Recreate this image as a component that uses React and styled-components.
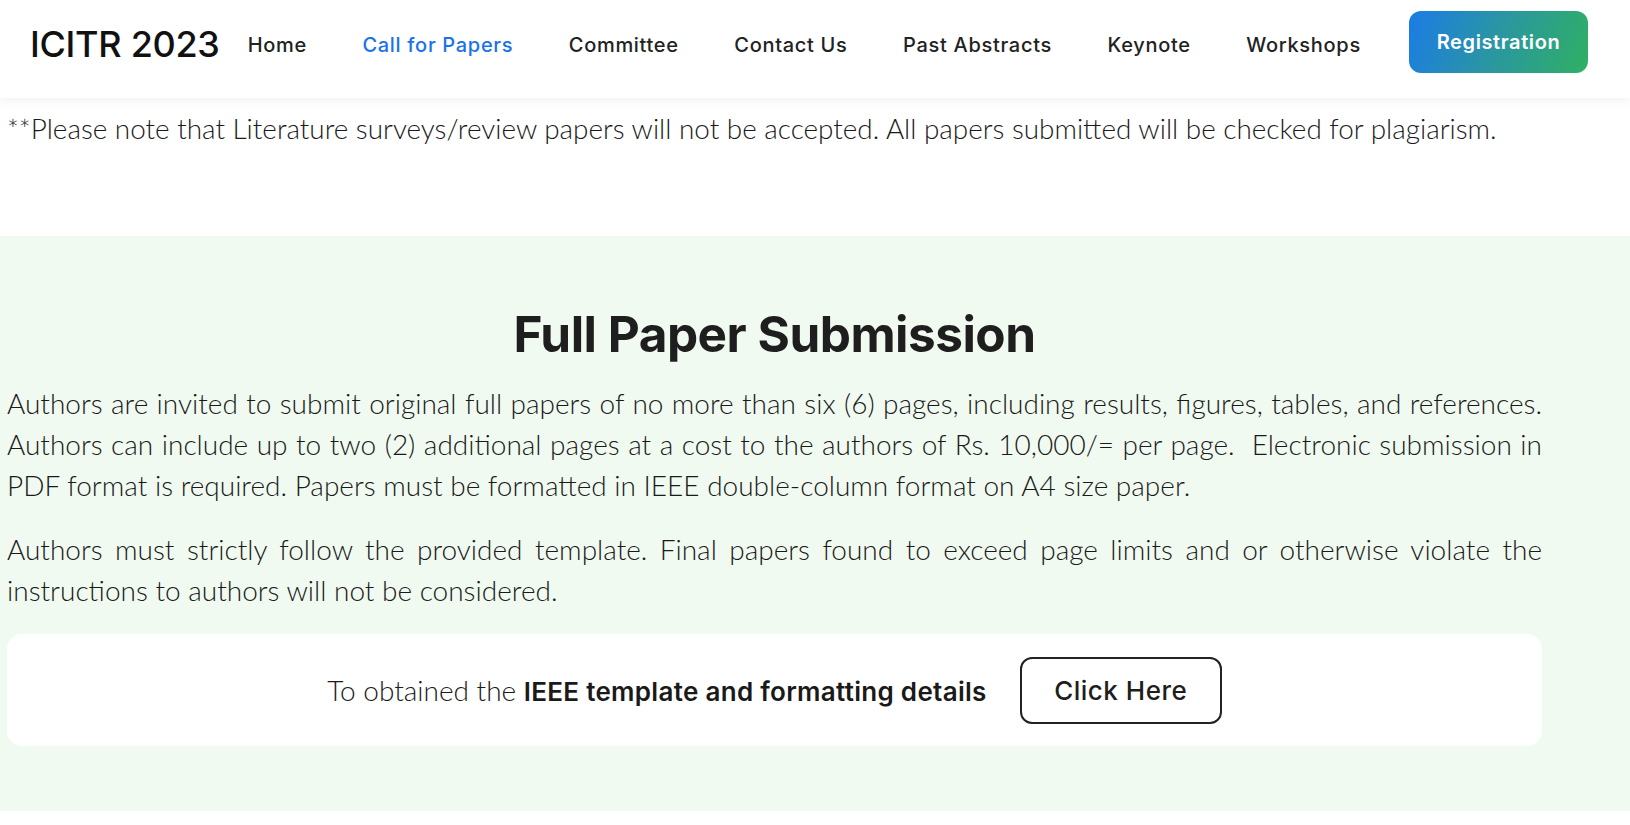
import React from "react";
import styled, { createGlobalStyle } from "styled-components";

const Global = createGlobalStyle`
  html, body { margin: 0; padding: 0; background: #fff; }
  body { font-family: "Lato", "Liberation Sans", sans-serif; color: #1e1e1e; }
  * { box-sizing: border-box; }
`;

const Header = styled.header`
  height: 98px;
  display: flex;
  align-items: center;
  padding: 0 42px 0 30px;
  background: #fff;
  box-shadow: 0 3px 10px rgba(0, 0, 0, 0.06);
  position: relative;
  z-index: 2;
`;

const Logo = styled.div`
  font-family: "Inter", sans-serif;
  font-size: 36px;
  font-weight: 500;
  letter-spacing: -0.3px;
  color: #111;
  margin-right: 28px;
  margin-top: -10px;
`;

const Nav = styled.nav`
  display: flex;
  align-items: center;
  gap: 55.5px;
  flex: 1;
  margin-top: -8px;
`;

const NavLink = styled.a`
  font-family: "Inter", sans-serif;
  font-size: 20px;
  font-weight: 500;
  letter-spacing: 0.7px;
  color: ${(p) => (p.$active ? "#1a73e8" : "#222")};
  text-decoration: none;
`;

const RegButton = styled.a`
  width: 179px;
  height: 62px;
  margin-top: -14px;
  border-radius: 12px;
  display: flex;
  align-items: center;
  justify-content: center;
  background: linear-gradient(110deg, #1c7be6 0%, #2a97a0 50%, #2fb063 100%);
  color: #fff;
  font-family: "Inter", sans-serif;
  font-weight: 600;
  font-size: 20px;
  letter-spacing: 0.6px;
  text-decoration: none;
`;

const Container = styled.div`
  width: 1535px;
  margin-left: 7px;
`;

const NoteSection = styled.section`
  height: 138px;
  padding-top: 10px;
`;

const Text = styled.p`
  margin: 0;
  font-family: "Lato", sans-serif;
  font-weight: 300;
  font-size: ${(p) => (p.$small ? "27.9px" : "28px")};
  line-height: 41px;
  color: #1a1a1a;
  text-align: ${(p) => (p.$justify ? "justify" : "left")};
  & + & { margin-top: 23px; }
`;

const GreenSection = styled.section`
  background: #f0faf1;
  height: 575px;
  padding-top: 68px;
`;

const Title = styled.h2`
  margin: 0 0 19px;
  text-align: center;
  font-family: "Inter", sans-serif;
  font-weight: 700;
  font-size: 49.5px;
  letter-spacing: -0.5px;
  color: #1e1e1e;
  line-height: 60px;
`;

const Card = styled.div`
  margin-top: 23px;
  height: 112px;
  background: #fff;
  border-radius: 15px;
  display: flex;
  align-items: center;
  justify-content: center;
  gap: 33px;
`;

const CardText = styled.span`
  font-family: "Lato", sans-serif;
  font-weight: 300;
  font-size: 28px;
  color: #1a1a1a;
  b {
    font-family: "Inter", sans-serif;
    font-weight: 600;
    font-size: 26px;
    letter-spacing: 0.3px;
  }
`;

const OutlineButton = styled.a`
  width: 202px;
  height: 67px;
  border: 2px solid #222;
  border-radius: 12px;
  display: flex;
  align-items: center;
  justify-content: center;
  font-family: "Inter", sans-serif;
  font-weight: 500;
  font-size: 26px;
  letter-spacing: 0.5px;
  color: #1e1e1e;
  text-decoration: none;
`;

const navItems = [
  "Home",
  "Call for Papers",
  "Committee",
  "Contact Us",
  "Past Abstracts",
  "Keynote",
  "Workshops",
];

export default function App() {
  return (
    <>
      <Global />
      <Header>
        <Logo>ICITR 2023</Logo>
        <Nav>
          {navItems.map((n) => (
            <NavLink key={n} $active={n === "Call for Papers"}>
              {n}
            </NavLink>
          ))}
        </Nav>
        <RegButton>Registration</RegButton>
      </Header>
      <NoteSection>
        <Container>
          <Text $small>
            **Please note that Literature surveys/review papers will not be
            accepted. All papers submitted will be checked for plagiarism.
          </Text>
        </Container>
      </NoteSection>
      <GreenSection>
        <Container>
          <Title>Full Paper Submission</Title>
          <Text $justify>
            Authors are invited to submit original full papers of no more than
            six (6) pages, including results, figures, tables, and references.
            Authors can include up to two (2) additional pages at a cost to the
            authors of Rs. 10,000/= per page.&nbsp; Electronic submission in PDF
            format is required. Papers must be formatted in IEEE double-column
            format on A4 size paper.
          </Text>
          <Text $justify>
            Authors must strictly follow the provided template. Final papers
            found to exceed page limits and or otherwise violate the
            instructions to authors will not be considered.
          </Text>
          <Card>
            <CardText>
              To obtained the <b>IEEE template and formatting details</b>
            </CardText>
            <OutlineButton>Click Here</OutlineButton>
          </Card>
        </Container>
      </GreenSection>
    </>
  );
}
